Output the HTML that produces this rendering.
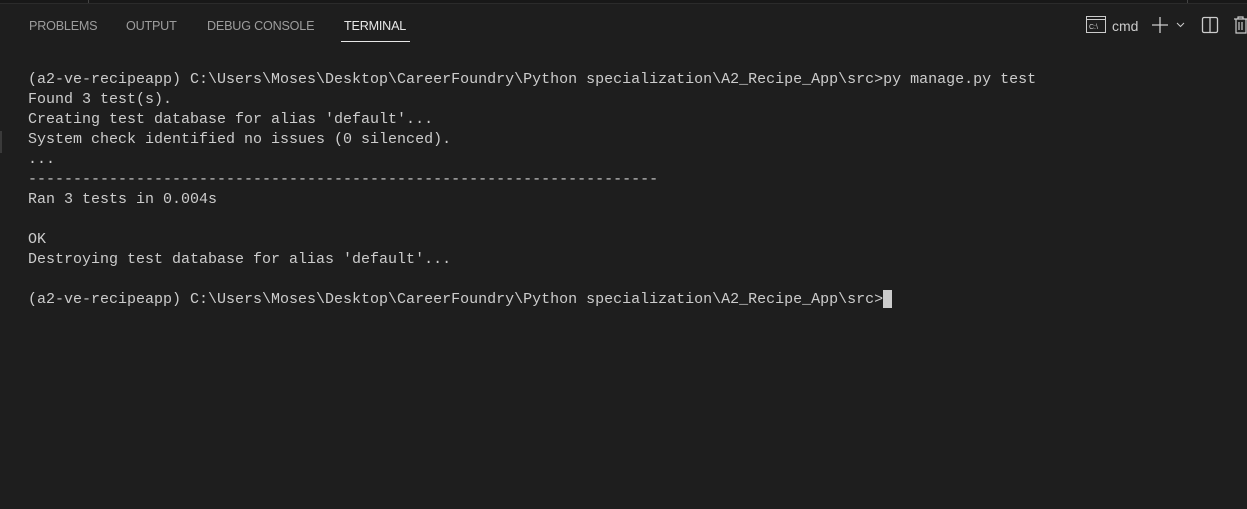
<!DOCTYPE html>
<html><head><style>
html,body{margin:0;padding:0;background:#1e1e1e;width:1247px;height:509px;overflow:hidden;position:relative}
.top{position:absolute;left:0;top:0;width:1247px;height:3px;background:#181818;border-bottom:1px solid #2b2b2b}
.tab{position:absolute;top:19px;font:12.6px "Liberation Sans",sans-serif;color:#9d9d9d;letter-spacing:-0.2px}
.act{color:#e7e7e7}
.ul{position:absolute;left:341px;top:41px;width:69px;height:1px;background:#e7e7e7}
pre{position:absolute;left:28px;top:70px;margin:0;font:15px/20px "Liberation Mono",monospace;color:#cccccc}
.cur{position:absolute;left:883px;top:290px;width:9px;height:18px;background:#cccccc}
.lm{position:absolute;left:0;top:131px;width:2px;height:22px;background:#3a3a3a}
</style></head><body>
<div class="top"></div>
<div style="position:absolute;left:88px;top:0;width:1px;height:3px;background:#444"></div>
<div style="position:absolute;left:1187px;top:0;width:1px;height:3px;background:#444"></div>
<div class="tab" style="left:29px">PROBLEMS</div>
<div class="tab" style="left:126px">OUTPUT</div>
<div class="tab" style="left:207px">DEBUG CONSOLE</div>
<div class="tab act" style="left:344px">TERMINAL</div>
<div class="ul"></div>
<svg style="position:absolute;left:1086px;top:16px" width="20" height="18" viewBox="0 0 20 18"><rect x="0.5" y="0.5" width="19" height="16" fill="none" stroke="#ccc"/><line x1="0.5" y1="3.5" x2="19.5" y2="3.5" stroke="#ccc"/><text x="3" y="13" font-family="Liberation Sans" font-size="7" fill="#ccc">C:\</text></svg>
<div style="position:absolute;left:1112px;top:18px;font:14px 'Liberation Sans',sans-serif;color:#ccc">cmd</div>
<svg style="position:absolute;left:1150px;top:15px" width="40" height="20" viewBox="0 0 40 20"><path d="M10 2V18M2 10H18" stroke="#ccc" stroke-width="1.3"/><path d="M27 8l3.5 3.5L34 8" stroke="#ccc" fill="none"/></svg>
<svg style="position:absolute;left:1201px;top:16px" width="18" height="18" viewBox="0 0 18 18"><rect x="1.5" y="1.5" width="15" height="15" rx="1.5" fill="none" stroke="#ccc" stroke-width="1.3"/><line x1="9" y1="1.5" x2="9" y2="16.5" stroke="#ccc" stroke-width="1.3"/></svg>
<svg style="position:absolute;left:1233px;top:15px" width="14" height="20" viewBox="0 0 14 20"><path d="M1 4H14M5 4V2H10V4M3 4V18H13V4M6 7V15M9 7V15" stroke="#ccc" fill="none" stroke-width="1.2"/></svg>
<div class="lm"></div>
<pre>(a2-ve-recipeapp) C:\Users\Moses\Desktop\CareerFoundry\Python specialization\A2_Recipe_App\src>py manage.py test
Found 3 test(s).
Creating test database for alias 'default'...
System check identified no issues (0 silenced).
...
----------------------------------------------------------------------
Ran 3 tests in 0.004s

OK
Destroying test database for alias 'default'...

(a2-ve-recipeapp) C:\Users\Moses\Desktop\CareerFoundry\Python specialization\A2_Recipe_App\src></pre>
<div class="cur"></div>
</body></html>
